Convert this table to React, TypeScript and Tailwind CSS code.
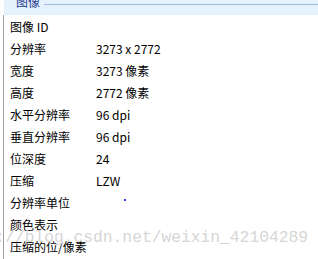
const rows: [string, string][] = [
  ["图像 ID", ""],
  ["分辨率", "3273 x 2772"],
  ["宽度", "3273 像素"],
  ["高度", "2772 像素"],
  ["水平分辨率", "96 dpi"],
  ["垂直分辨率", "96 dpi"],
  ["位深度", "24"],
  ["压缩", "LZW"],
  ["分辨率单位", ""],
  ["颜色表示", ""],
  ["压缩的位/像素", ""],
];

const App = () => {
  return (
    <div
      className="relative w-[318px] h-[259px] overflow-hidden bg-white text-[12px] text-black"
      style={{ fontFamily: '"Microsoft YaHei", "Noto Sans CJK SC", sans-serif' }}
    >
      {/* group header */}
      <div className="ml-[4px] flex h-[15px] items-start overflow-hidden bg-[#e5f1fb] pl-[12px]">
        <span className="-mt-[7px] leading-[18px] text-[#1c3a8f]">图像</span>
        <div className="ml-[4px] mt-[4px] h-px flex-1 bg-[#9fbbe6]" />
      </div>

      <div className="ml-[3px] flex h-full flex-col border-l border-[#a0a0a0] pt-[1px]">
        {rows.map(([name, value], i) => (
          <div key={i} className="flex h-[22px] items-center">
            <span className="w-[92px] pl-[6px] whitespace-nowrap">{name}</span>
            <span className="whitespace-nowrap">{value}</span>
          </div>
        ))}
      </div>

      <div className="absolute left-[124px] top-[199px] h-[2px] w-[2px] bg-[#2f3bf0]" />

      {/* blog watermark */}
      <div
        className="pointer-events-none absolute right-[10px] top-[228px] whitespace-nowrap text-[16.3px] leading-[20px] text-[#d6d6d6]"
        style={{ fontFamily: '"Liberation Mono", monospace' }}
      >
        http://blog.csdn.net/weixin_42104289
      </div>
    </div>
  );
};

export default App;
